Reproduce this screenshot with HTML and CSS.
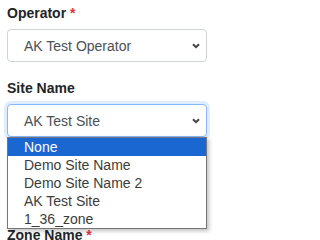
FILE: index.html
```html
<!DOCTYPE html>
<html>
<head>
<meta charset="utf-8">
<link rel="stylesheet" href="styles.css">
</head>
<body>
<form class="form">
  <div class="field">
    <div class="label">Operator <span class="req">*</span></div>
    <div class="select">
      <span class="value">AK Test Operator</span>
      <svg class="chev" width="8" height="6" viewBox="0 0 8 6"><path d="M1 1.2 L4 4.2 L7 1.2" fill="none" stroke="#444" stroke-width="2"/></svg>
    </div>
  </div>
  <div class="field site">
    <div class="label">Site Name</div>
    <div class="select focus">
      <span class="value">AK Test Site</span>
      <svg class="chev" width="8" height="6" viewBox="0 0 8 6"><path d="M1 1.2 L4 4.2 L7 1.2" fill="none" stroke="#444" stroke-width="2"/></svg>
    </div>
    <ul class="popup">
      <li class="opt active">None</li>
      <li class="opt">Demo Site Name</li>
      <li class="opt">Demo Site Name 2</li>
      <li class="opt">AK Test Site</li>
      <li class="opt">1_36_zone</li>
    </ul>
  </div>
  <div class="field covered"></div>
  <div class="field">
    <div class="label">Zone Name <span class="req">*</span></div>
  </div>
</form>
</body>
</html>
```
FILE: styles.css
```css
html, body {
  margin: 0;
  padding: 0;
  background: #fff;
}
body {
  font-family: "Liberation Sans", Arial, sans-serif;
  font-size: 14px;
  color: #212529;
  overflow: hidden;
}
.form {
  display: flex;
  flex-direction: column;
  padding: 3px 8px 0 7px;
}
.field {
  display: flex;
  flex-direction: column;
  margin-bottom: 16px;
}
.site {
  position: relative;
}
.covered {
  height: 56px;
}
.label {
  font-weight: bold;
  font-size: 14px;
  line-height: 21px;
  color: #212529;
  margin-bottom: 5px;
}
.req {
  color: #dc3545;
}
.select {
  box-sizing: border-box;
  height: 33px;
  width: 200px;
  border: 1px solid #ced4da;
  border-radius: 4px;
  display: flex;
  align-items: center;
  justify-content: space-between;
  padding: 0 6px 0 16px;
  color: #495057;
  background: #fff;
}
.select.focus {
  border-color: #86b7fe;
  box-shadow: 0 0 0 3px rgba(13, 110, 253, 0.13);
}
.value {
  line-height: 20px;
}
.chev {
  display: block;
  margin-top: 1px;
}
.popup {
  position: absolute;
  top: 100%;
  left: 0;
  box-sizing: border-box;
  width: 200px;
  margin: 0;
  padding: 0;
  list-style: none;
  background: #fff;
  border: 1px solid #767676;
  box-shadow: 2px 2px 4px rgba(0, 0, 0, 0.25);
  z-index: 2;
}
.opt {
  height: 18px;
  line-height: 18px;
  padding-left: 16px;
  color: #3c3c3c;
}
.opt.active {
  background: #1a67d2;
  color: #fff;
}
```
